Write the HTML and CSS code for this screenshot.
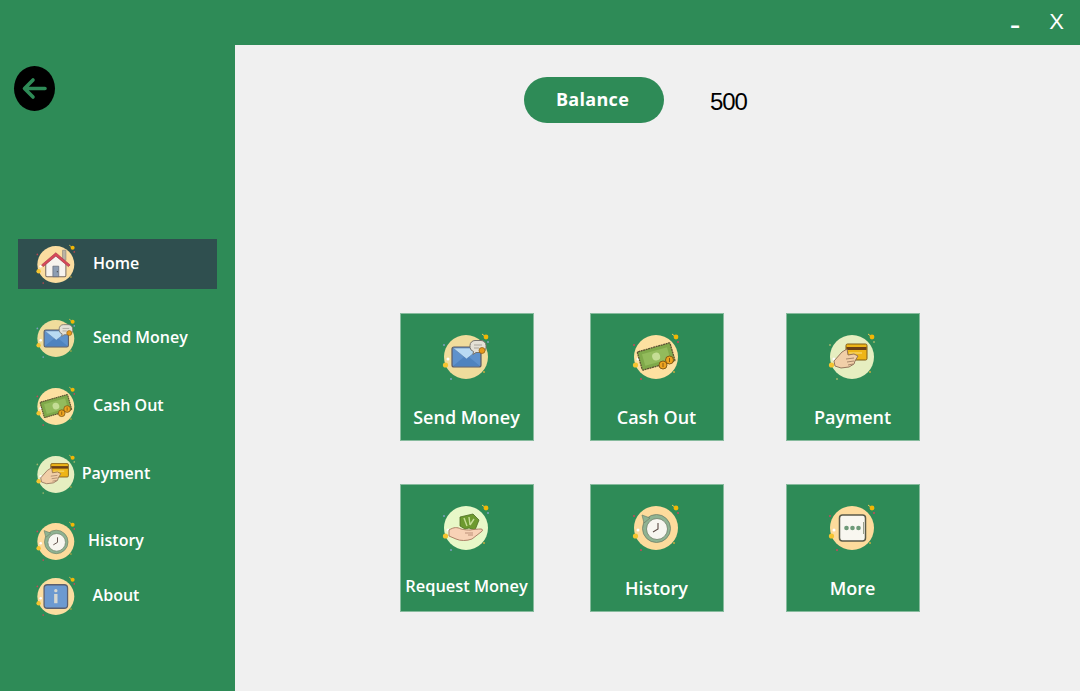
FILE: index.html
```html
<!DOCTYPE html>
<html lang="en">
<head>
    <meta charset="UTF-8">
    <meta name="viewport" content="width=device-width, initial-scale=1.0">
    <title>Wallet</title>
    <link rel="stylesheet" href="styles.css">
</head>
<body>
    <!-- icon sheet, reused by the sidebar and the tiles -->
    <svg class="icon-sheet" xmlns="http://www.w3.org/2000/svg">
        <symbol id="sparks" viewBox="0 0 56 56">
            <circle cx="46" cy="8" r="2.4" fill="#f2b705"/>
            <path d="M42 5l2 1.500" stroke="#f2c94c" stroke-width="1"/>
            <circle cx="5.500" cy="36" r="2.600" fill="#f4c430"/>
            <circle cx="8" cy="30" r="1.500" fill="#fff"/>
            <circle cx="4" cy="16" r="1" fill="currentColor"/>
            <circle cx="48" cy="13" r="1" fill="currentColor"/>
            <circle cx="11" cy="50" r="1" fill="currentColor"/>
            <circle cx="44" cy="43" r="0.900" fill="#d9b13b"/>
        </symbol>

        <symbol id="i-home" viewBox="0 0 56 56">
            <circle cx="26" cy="28" r="22" fill="#fbdda0"/>
            <use href="#sparks" width="56" height="56" color="#b5454f"/>
            <path d="M34 11h4v12h-4z" fill="#b9b2a6" stroke="#8d867c" stroke-width=".8"/>
            <path d="M14 27v14a1.500 1.500 0 0 0 1.500 1.500h21a1.500 1.500 0 0 0 1.500-1.500V27L26 17z" fill="#f7f3ee" stroke="#7a6a60" stroke-width="1.200"/>
            <path d="M9 28.500L26 14l17 14.500-2 2L26 18 11 30.500z" fill="#d8475a" stroke="#a83a4a" stroke-width=".8"/>
            <path d="M22.500 30h7v12.500h-7z" fill="#8d9db3" stroke="#5e6472" stroke-width=".8"/>
            <circle cx="27.800" cy="36.500" r=".7" fill="#444"/>
        </symbol>

        <symbol id="i-send" viewBox="0 0 56 56">
            <circle cx="26" cy="28" r="22" fill="#f0dc9c"/>
            <use href="#sparks" width="56" height="56" color="#7f9fbf"/>
            <rect x="12" y="18" width="29" height="20" rx="2" fill="#5f92cc" stroke="#5c5a62" stroke-width="1.200"/>
            <path d="M13 19h27L26.500 30z" fill="#b9daf3" stroke="#5c7fa8" stroke-width=".6"/>
            <path d="M13 37l11-9 2.500 2 2.500-2 11 9z" fill="#4f83bf"/>
            <path d="M35 11.500h6a5 5 0 0 1 5 5v2a5 5 0 0 1-5 5h-5l-3 2 .5-3a5 5 0 0 1-3.500-4v-2a5 5 0 0 1 5-5z" fill="#e4e0d6" stroke="#77736c" stroke-width="1"/>
            <path d="M34 16h8M34 19h5" stroke="#a8a49c" stroke-width="1"/>
            <circle cx="42" cy="21.500" r="3" fill="#e79a1d" stroke="#8a5a14" stroke-width=".7"/>
        </symbol>

        <symbol id="i-cash" viewBox="0 0 56 56">
            <circle cx="26" cy="28" r="22" fill="#fde0a0"/>
            <use href="#sparks" width="56" height="56" color="#c8475a"/>
            <g transform="rotate(-16 26 27)">
                <rect x="9" y="18" width="34" height="19" rx="1" fill="#7fa94a" stroke="#5a5132" stroke-width="1.300" stroke-dasharray="2 .6"/>
                <rect x="13" y="21.500" width="26" height="12" fill="#93bb5c"/>
                <circle cx="26" cy="27.500" r="4" fill="#c5dd95"/>
            </g>
            <circle cx="33" cy="36" r="4" fill="#eda31f" stroke="#7a5312" stroke-width=".9"/>
            <circle cx="39.500" cy="31" r="4" fill="#eda31f" stroke="#7a5312" stroke-width=".9"/>
            <path d="M33 34v4M39.500 29v4" stroke="#7a5312" stroke-width=".9"/>
        </symbol>

        <symbol id="i-pay" viewBox="0 0 56 56">
            <circle cx="26" cy="28" r="22" fill="#e6eec0"/>
            <use href="#sparks" width="56" height="56" color="#9db36a"/>
            <rect x="20" y="15" width="21" height="16" rx="1.500" fill="#eeb517" stroke="#7f5a16" stroke-width="1"/>
            <rect x="20.500" y="18" width="20" height="3" fill="#6b3f16"/>
            <path d="M23 24h13" stroke="#fbe38a" stroke-width="1"/>
            <path d="M8 32l8-9 5-3 1 6 6-1 4 2-3 5-1 3-5 3-8 1-6-2z" fill="#f1cfa8" stroke="#8a6a52" stroke-width=".9"/>
            <path d="M20 30l8-1M21 33l7-1M22 36l5-1" stroke="#8a6a52" stroke-width=".7"/>
        </symbol>

        <symbol id="i-request" viewBox="0 0 56 56">
            <circle cx="26" cy="28" r="22" fill="#e8f8c8"/>
            <use href="#sparks" width="56" height="56" color="#7f9fbf"/>
            <path d="M20 17l13-3 6 6-4 10-6-2-4 1-5-3z" fill="#6d9a2e" stroke="#4c6d22" stroke-width=".8"/>
            <path d="M24 18l3 8M29 17l1 8M34 19l-4 6" stroke="#c5dd95" stroke-width="1.400" fill="none"/>
            <path d="M9 30c5-3 8-3 12-1 4 1 7 1 9 1 3-.5 8-1 11-1 2 0 2 2 0 3l-9 7c-5 2-12 2-16 0l-7-3z" fill="#f8d2b6" stroke="#a4775e" stroke-width=".9"/>
            <path d="M25 33h8M28 35h5" stroke="#a4775e" stroke-width=".7"/>
        </symbol>

        <symbol id="i-history" viewBox="0 0 56 56">
            <circle cx="26" cy="28" r="22" fill="#fddb9c"/>
            <use href="#sparks" width="56" height="56" color="#c8475a"/>
            <circle cx="26.500" cy="28.500" r="14" fill="#8fb392" stroke="#6f7f68" stroke-width=".8"/>
            <circle cx="27" cy="29" r="10.500" fill="#f7f6f0" stroke="#6f7f68" stroke-width=".8"/>
            <path d="M28 23v6l-5 3" stroke="#5b4a44" stroke-width="1.100" fill="none"/>
            <path d="M12 15l2 8 6-5z" fill="#8fb392" stroke="#6f7f68" stroke-width=".7"/>
        </symbol>

        <symbol id="i-more" viewBox="0 0 56 56">
            <circle cx="26" cy="28" r="22" fill="#fddb9c"/>
            <use href="#sparks" width="56" height="56" color="#c8475a"/>
            <rect x="13.500" y="15" width="26" height="26" rx="3" fill="#f8f7f0" stroke="#5a5a48" stroke-width="1.500"/>
            <circle cx="20.500" cy="28" r="2.300" fill="#6d9a78"/>
            <circle cx="26.500" cy="28" r="2.300" fill="#6d9a78"/>
            <circle cx="32.500" cy="28" r="2.300" fill="#6d9a78"/>
            <path d="M37.500 22v12" stroke="#9aa08c" stroke-width="1"/>
        </symbol>

        <symbol id="i-about" viewBox="0 0 56 56">
            <circle cx="26" cy="28" r="22" fill="#fbdda0"/>
            <use href="#sparks" width="56" height="56" color="#c8475a"/>
            <rect x="12" y="14" width="28" height="28" rx="4" fill="#6d9ad0" stroke="#5c5f6e" stroke-width="1.500"/>
            <circle cx="26" cy="21" r="2" fill="#d8d8d0"/>
            <rect x="24" y="25" width="4" height="11" fill="#d8d8d0"/>
        </symbol>
    </svg>

    <div class="app">
        <header class="titlebar">
            <span class="win-btn win-min">-</span>
            <span class="win-btn win-close">X</span>
        </header>

        <div class="main">
            <aside class="sidebar">
                <button class="back-btn" aria-label="Back">
                    <svg viewBox="0 0 41 45" width="41" height="45">
                        <path d="M31 22.500H11M19 14l-8.500 8.500L19 31" fill="none" stroke="#2e8b57" stroke-width="3.600" stroke-linecap="round" stroke-linejoin="round"/>
                    </svg>
                </button>

                <nav class="nav">
                    <a class="nav-item active"><svg class="nav-icon"><use href="#i-home"/></svg><span class="nav-label">Home</span></a>
                    <a class="nav-item"><svg class="nav-icon"><use href="#i-send"/></svg><span class="nav-label">Send Money</span></a>
                    <a class="nav-item"><svg class="nav-icon"><use href="#i-cash"/></svg><span class="nav-label">Cash Out</span></a>
                    <a class="nav-item"><svg class="nav-icon"><use href="#i-pay"/></svg><span class="nav-label centered">Payment</span></a>
                    <a class="nav-item"><svg class="nav-icon"><use href="#i-history"/></svg><span class="nav-label centered">History</span></a>
                    <a class="nav-item"><svg class="nav-icon"><use href="#i-about"/></svg><span class="nav-label centered">About</span></a>
                </nav>
            </aside>

            <main class="content">
                <div class="balance-row">
                    <div class="balance-pill">Balance</div>
                    <div class="balance-value">500</div>
                </div>

                <div class="tiles">
                    <a class="tile"><svg class="tile-icon"><use href="#i-send"/></svg><span class="tile-label">Send Money</span></a>
                    <a class="tile"><svg class="tile-icon"><use href="#i-cash"/></svg><span class="tile-label">Cash Out</span></a>
                    <a class="tile"><svg class="tile-icon"><use href="#i-pay"/></svg><span class="tile-label">Payment</span></a>
                    <a class="tile"><svg class="tile-icon"><use href="#i-request"/></svg><span class="tile-label small">Request Money</span></a>
                    <a class="tile"><svg class="tile-icon"><use href="#i-history"/></svg><span class="tile-label">History</span></a>
                    <a class="tile"><svg class="tile-icon"><use href="#i-more"/></svg><span class="tile-label">More</span></a>
                </div>
            </main>
        </div>
    </div>
</body>
</html>
```

FILE: styles.css
```css
:root {
    --green: #2e8b57;
    --slate: #2f4f4f;
    --light: #f0f0f0;
}

body {
    margin: 0;
    font-family: 'Open Sans', sans-serif;
    background: var(--light);
}

.icon-sheet {
    display: none;
}

.app {
    height: 691px;
    display: flex;
    flex-direction: column;
    overflow: hidden;
}

.titlebar {
    height: 45px;
    flex: none;
    background: var(--green);
    display: flex;
    justify-content: flex-end;
    align-items: flex-start;
    color: white;
    font-family: 'Liberation Sans', sans-serif;
    font-size: 22px;
    line-height: 44px;
}

.win-min {
    margin-right: 29px;
    font-size: 32px;
    line-height: 48px;
}

.win-close {
    margin-right: 16px;
}

.main {
    flex: 1;
    display: flex;
}

.sidebar {
    width: 235px;
    flex: none;
    background: var(--green);
}

.back-btn {
    display: block;
    width: 41px;
    height: 45px;
    margin: 21px 0 0 14px;
    padding: 0;
    border: none;
    border-radius: 50%;
    background: black;
}

.back-btn svg {
    display: block;
}

.nav {
    display: grid;
    grid-template-rows: 74px 68px 68px 67px 55px 50px;
    width: 199px;
    margin: 128px 0 0 18px;
}

.nav-item {
    display: flex;
    align-items: center;
    height: 50px;
    padding-left: 16px;
    color: white;
    font-size: 16px;
    font-weight: 600;
    line-height: 20px;
}

.nav-item.active {
    background: var(--slate);
}

.nav-icon {
    width: 47px;
    height: 47px;
    flex: none;
}

.nav-label {
    margin: -2px 0 0 12px;
    white-space: nowrap;
}

.nav-label.centered {
    width: 72px;
    margin-left: -1px;
    text-align: center;
}

.content {
    flex: 1;
    padding-left: 165px;
}

.balance-row {
    display: flex;
    align-items: center;
    margin: 32px 0 0 124px;
}

.balance-pill {
    width: 140px;
    height: 46px;
    border-radius: 23px;
    background: var(--green);
    color: white;
    font-size: 18px;
    font-weight: 700;
    letter-spacing: .3px;
    line-height: 45px;
    text-indent: -3px;
    text-align: center;
}

.balance-value {
    margin: 4px 0 0 46px;
    font-family: 'Liberation Sans', sans-serif;
    font-size: 24px;
    letter-spacing: -1.100px;
    color: black;
}

.tiles {
    display: grid;
    grid-template-columns: 190px 196px 134px;
    grid-auto-rows: 171px;
    margin-top: 190px;
}

.tile {
    width: 134px;
    height: 128px;
    box-sizing: border-box;
    display: flex;
    flex-direction: column;
    align-items: center;
    background: var(--green);
    border: 1px solid #86bb9d;
    color: white;
    font-size: 18px;
    font-weight: 600;
}

.tile-icon {
    width: 56px;
    height: 56px;
    margin: 15px 0 0 2px;
    flex: none;
}

.tile-label {
    margin: 19px 1px 0 0;
    line-height: 26px;
    white-space: nowrap;
}

.tile-label.small {
    margin-top: 17px;
    font-size: 16.400px;
}
```
